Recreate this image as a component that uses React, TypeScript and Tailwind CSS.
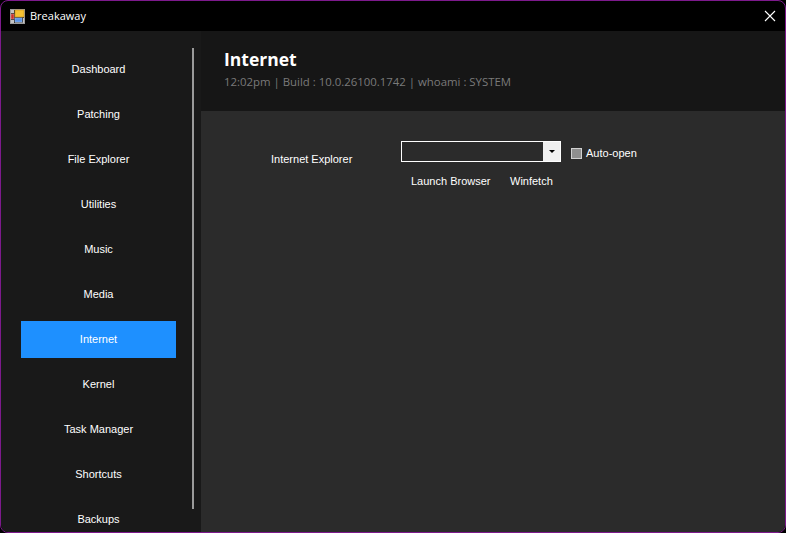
const navItems = [
  "Dashboard",
  "Patching",
  "File Explorer",
  "Utilities",
  "Music",
  "Media",
  "Internet",
  "Kernel",
  "Task Manager",
  "Shortcuts",
  "Backups",
];

const AppIcon = () => (
  <svg width="15" height="15" viewBox="0 0 15 15" className="shrink-0">
    <rect x="0.5" y="0.5" width="14" height="14" fill="#2e2e2e" stroke="#9c9c9c" />
    <rect x="1" y="1" width="3" height="3" fill="#c4c4c4" />
    <rect x="1" y="5" width="3" height="5" fill="#c9302c" stroke="#e8a09a" strokeWidth="0.5" />
    <rect x="1" y="11" width="3" height="3" fill="#c4c4c4" />
    <rect x="5" y="1" width="9" height="7" fill="#f6c232" stroke="#c98f18" strokeWidth="0.6" />
    <rect x="5" y="9" width="7" height="4" fill="#5b93e6" stroke="#9cc0f2" strokeWidth="0.5" />
    <rect x="13" y="9" width="1" height="5" fill="#c4c4c4" />
    <rect x="5" y="13.5" width="8" height="0.5" fill="#c4c4c4" />
  </svg>
);

const Sidebar = () => (
  <div className="flex w-[200px] shrink-0 overflow-hidden bg-[#191919]">
    <div className="flex w-[191px] shrink-0 flex-col gap-2 pl-5 pr-4 pt-5">
      {navItems.map((item) => (
        <div
          key={item}
          className={`flex h-[37px] w-[155px] shrink-0 items-center justify-center text-[11px] text-white ${
            item === "Internet" ? "bg-[#1e90ff]" : ""
          }`}
        >
          {item}
        </div>
      ))}
    </div>
    <div className="mt-[17px] h-[461px] w-[2px] shrink-0 bg-[#9a9a9a]" />
  </div>
);

const Content = () => (
  <div className="flex min-w-0 flex-1 flex-col">
    <div className="h-[80px] shrink-0 bg-[#161616] pl-[23px] pt-[16px] font-['Open_Sans',sans-serif]">
      <div className="text-[17.5px] leading-[24px] font-bold text-white">Internet</div>
      <div className="mt-[3px] text-[11.4px] leading-[16px] text-[#7a7a7a]">
        12:02pm | Build : 10.0.26100.1742 | whoami : SYSTEM
      </div>
    </div>
    <div className="flex flex-1 bg-[#2b2b2b] pt-[30px]">
      <div className="ml-[70px] w-[130px] pt-[10px] text-[11px] leading-[16px] text-white">
        Internet Explorer
      </div>
      <div className="flex flex-col">
        <div className="flex items-center">
          <div className="flex h-[21px] w-[160px] border border-white bg-[#2b2b2b]">
            <div className="flex-1" />
            <div className="flex w-[17px] items-center justify-center bg-[#f0f0f0]">
              <div className="h-0 w-0 border-x-[3px] border-t-[3px] border-x-transparent border-t-black" />
            </div>
          </div>
          <div className="mt-[3px] ml-[10px] h-[11px] w-[11px] border border-[#d0d0d0] bg-[#8f8f8f]" />
          <div className="mt-[3px] ml-[4px] text-[11px] leading-[16px] text-white">Auto-open</div>
        </div>
        <div className="mt-[11px] flex pl-[10px] text-[11px] leading-[16px] text-white">
          <div className="w-[99px]">Launch Browser</div>
          <div>Winfetch</div>
        </div>
      </div>
    </div>
  </div>
);

export default function App() {
  return (
    <div className="h-[533px] w-[786px] bg-black font-['Liberation_Sans',sans-serif]">
      <div className="flex h-full flex-col overflow-hidden rounded-[8px] border border-[#7d1a8c] bg-black">
        <div className="flex h-[30px] shrink-0 items-center pl-[9px] pr-[9px]">
          <AppIcon />
          <div className="ml-[5px] font-['Open_Sans',sans-serif] text-[11px] text-white">Breakaway</div>
          <svg width="12" height="12" viewBox="0 0 12 12" className="ml-auto" stroke="#fff" strokeWidth="1.1">
            <path d="M1 1 L11 11 M11 1 L1 11" />
          </svg>
        </div>
        <div className="flex min-h-0 flex-1">
          <Sidebar />
          <Content />
        </div>
      </div>
    </div>
  );
}
